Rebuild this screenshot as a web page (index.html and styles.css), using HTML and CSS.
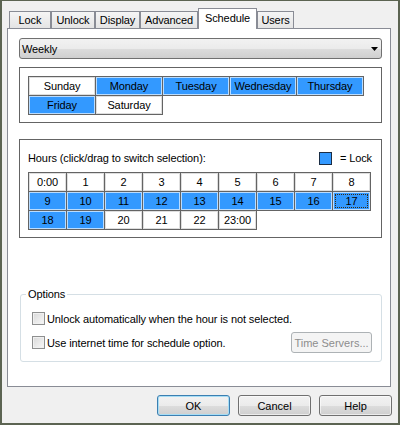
FILE: index.html
```html
<!DOCTYPE html>
<html>
<head>
<meta charset="utf-8">
<link rel="stylesheet" href="styles.css">
</head>
<body>
<div class="window">
  <div class="tabs">
    <div class="tab t-lock">Lock</div>
    <div class="tab t-unlock">Unlock</div>
    <div class="tab t-display">Display</div>
    <div class="tab t-adv">Advanced</div>
    <div class="tab t-sched active">Schedule</div>
    <div class="tab t-users">Users</div>
  </div>
  <div class="panel">
    <div class="combo"><span>Weekly</span><svg class="arrow" width="7" height="4" viewBox="0 0 7 4"><path d="M0 0H7L3.5 4Z" fill="#000"/></svg></div>
    <div class="box days">
      <div class="days-grid">
        <div class="cell">Sunday</div>
        <div class="cell on">Monday</div>
        <div class="cell on">Tuesday</div>
        <div class="cell on">Wednesday</div>
        <div class="cell on">Thursday</div>
        <div class="cell on">Friday</div>
        <div class="cell">Saturday</div>
      </div>
    </div>
    <div class="box hours">
      <div class="hours-head">
        <span>Hours (click/drag to switch selection):</span>
        <span class="legend"><span class="swatch"></span>= Lock</span>
      </div>
      <div class="hours-grid">
        <div class="cell">0:00</div>
        <div class="cell">1</div>
        <div class="cell">2</div>
        <div class="cell">3</div>
        <div class="cell">4</div>
        <div class="cell">5</div>
        <div class="cell">6</div>
        <div class="cell">7</div>
        <div class="cell">8</div>
        <div class="cell on">9</div>
        <div class="cell on">10</div>
        <div class="cell on">11</div>
        <div class="cell on">12</div>
        <div class="cell on">13</div>
        <div class="cell on">14</div>
        <div class="cell on">15</div>
        <div class="cell on">16</div>
        <div class="cell on focus">17</div>
        <div class="cell on">18</div>
        <div class="cell on">19</div>
        <div class="cell">20</div>
        <div class="cell">21</div>
        <div class="cell">22</div>
        <div class="cell">23:00</div>
      </div>
    </div>
    <fieldset class="options">
      <legend>Options</legend>
      <div class="opt first"><span class="check"></span>Unlock automatically when the hour is not selected.</div>
      <div class="opt"><span class="check"></span>Use internet time for schedule option.<button class="btn disabled">Time Servers...</button></div>
    </fieldset>
  </div>
  <div class="buttons">
    <button class="btn default">OK</button>
    <button class="btn">Cancel</button>
    <button class="btn">Help</button>
  </div>
</div>
</body>
</html>
```
FILE: styles.css
```css
* { box-sizing: border-box; }
body { margin: 0; font: 11px "Liberation Sans", Arial, sans-serif; letter-spacing: -0.1px; color: #000; }
.window {
  width: 400px; height: 425px; background: #f0f0f0;
  border: 2px solid #5c6452; border-top-width: 1px;
  padding-top: 7px;
}
.tabs { display: flex; align-items: flex-end; height: 20px; margin-left: 7px; }
.tab {
  height: 17px; border: 1px solid #898c95; border-bottom: none;
  background: linear-gradient(#f5f5f5, #e4e4e4);
  line-height: 16px; text-align: center; white-space: nowrap;
}
.t-lock { width: 42px; }
.t-unlock { width: 44px; }
.t-display { width: 45px; }
.t-adv { width: 58px; }
.t-sched { width: 59px; }
.t-users { width: 37px; }
.tab.active {
  height: 21px; margin-bottom: -1px; background: #fff;
  position: relative; z-index: 1; line-height: 19px;
}
.panel {
  margin-left: 5px; width: 384px; height: 359px; background: #fff;
  border: 1px solid #898c95; padding: 9px 0 0 11px;
}
.combo {
  width: 363px; height: 21px; border: 1px solid #707070; border-radius: 3px;
  background: linear-gradient(#f2f2f2 0, #ebebeb 50%, #dddddd 50%, #cfcfcf 100%);
  display: flex; align-items: center; justify-content: space-between;
  padding: 0 3px 0 2px;
}
.arrow { display: block; }
.box { width: 363px; border: 1px solid #646464; }
.days { margin-top: 8px; height: 56px; padding: 8px 0 0 8px; }
.days-grid { display: grid; grid-template-columns: repeat(5, 67px); grid-auto-rows: 19px; }
.cell {
  border: 1px solid #646464; margin-right: -1px; margin-bottom: -1px;
  background: #fff; box-shadow: inset 0 0 0 1px #dedede;
  text-align: center; line-height: 18px;
}
.cell.on { background: #3399ff; box-shadow: inset 0 0 0 1px #b9dcff; }
.cell.focus { outline: 1px dotted #3a2a10; outline-offset: -4px; }
.hours { margin-top: 16px; height: 99px; padding: 8px 9px 0 8px; }
.hours-head { display: flex; justify-content: space-between; align-items: center; height: 20px; margin-bottom: 4px; }
.legend { display: flex; align-items: center; gap: 8px; }
.swatch { width: 13px; height: 13px; background: #3399ff; border: 1px solid #1b2d44; }
.hours-grid { display: grid; grid-template-columns: repeat(9, 38px); grid-auto-rows: 19px; }
.options {
  margin: 50px 0 0 1px; width: 362px; border: 1px solid #d5dfe5; border-radius: 3px;
  padding: 0 9px 8px 11px; min-inline-size: 0;
}
.options legend { padding: 0 2px; margin-left: -6px; line-height: 13px; }
.opt { display: flex; align-items: center; height: 21px; margin-top: 3px; }
.opt.first { margin-top: 7px; }
.check {
  width: 13px; height: 13px; border: 1px solid #8e8f8f; margin-right: 2px;
  background: linear-gradient(135deg, #d8d8d8, #f8f8f8);
  box-shadow: inset 0 0 0 1px #f0f0f0;
}
.btn {
  font: inherit; width: 73px; height: 21px; padding: 0; color: #000;
  border: 1px solid #707070; border-radius: 3px;
  background: linear-gradient(#f2f2f2 0, #ebebeb 50%, #dddddd 50%, #cfcfcf 100%);
  box-shadow: inset 0 0 0 1px rgba(255,255,255,0.6);
}
.btn.default { border-color: #3c7fb1; box-shadow: inset 0 0 0 1px #a6ddf5; }
.btn.disabled {
  margin-left: auto; width: 81px; color: #8d8d8d; border-color: #adb2b5;
  background: #f4f4f4; box-shadow: none;
}
.buttons { display: flex; justify-content: flex-end; gap: 8px; margin-top: 8px; padding-right: 6px; }
```
